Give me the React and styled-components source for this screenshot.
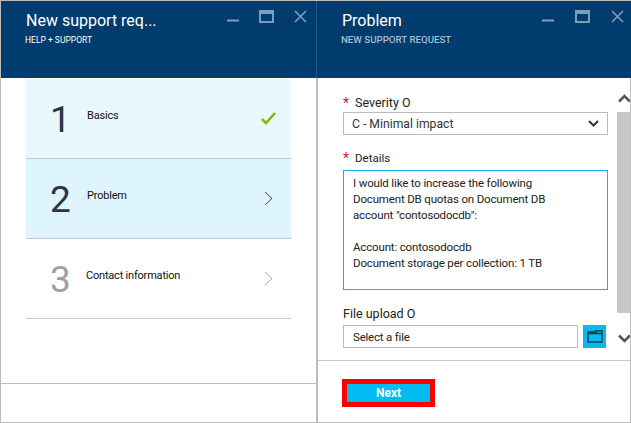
import React from 'react';
import styled, { createGlobalStyle } from 'styled-components';

const GlobalStyle = createGlobalStyle`
html, body {
    margin: 0;
    padding: 0;
    background: #fff;
}
* {
    box-sizing: border-box;
}
`;

const steps = [
    { num: '1', label: 'Basics', bg: '#e9f8fe', done: true },
    { num: '2', label: 'Problem', bg: '#dff5fd' },
    { num: '3', label: 'Contact information', bg: '#fff', muted: true },
];

const WindowButtons = ({ right }) => (
    <Buttons $right={right}>
        <svg width="12" height="3" viewBox="0 0 12 3"><rect width="12" height="2" y="0.5" fill="#7f9cb9" /></svg>
        <svg width="15" height="13" viewBox="0 0 15 13"><path d="M0 0h15v13H0zM2 4v7h11V4z" fill="#7f9cb9" fillRule="evenodd" /></svg>
        <svg width="13" height="13" viewBox="0 0 13 13"><path d="M1 1l11 11M12 1L1 12" stroke="#7f9cb9" strokeWidth="1.6" /></svg>
    </Buttons>
);

export default function App() {
    return (
        <Page>
            <GlobalStyle />
            <LeftBlade>
                <Header $left>
                    <TitleBlock>
                        <Title>New support req...</Title>
                        <Subtitle>HELP + SUPPORT</Subtitle>
                    </TitleBlock>
                    <WindowButtons />
                </Header>
                <LeftContent>
                    <StepList>
                        {steps.map(s => (
                            <Step key={s.num} $bg={s.bg}>
                                <StepNum $muted={s.muted}>{s.num}</StepNum>
                                <StepLabel $offset={s.muted}>{s.label}</StepLabel>
                                <StepIcon>
                                    {s.done ? (
                                        <svg width="15" height="13" viewBox="0 0 15 13"><path d="M1 7l4 4 9-10" fill="none" stroke="#7fba00" strokeWidth="2.6" /></svg>
                                    ) : (
                                        <svg width="9" height="15" viewBox="0 0 9 15"><path d="M1 1l7 6.5L1 14" fill="none" stroke={s.muted ? '#a8a8a8' : '#444'} strokeWidth="1" /></svg>
                                    )}
                                </StepIcon>
                            </Step>
                        ))}
                    </StepList>
                    <LeftFooter />
                </LeftContent>
            </LeftBlade>
            <RightBlade>
                <Header>
                    <TitleBlock>
                        <Title>Problem</Title>
                        <SubtitleMuted>NEW SUPPORT REQUEST</SubtitleMuted>
                    </TitleBlock>
                    <WindowButtons right />
                </Header>
                <Body>
                    <Form>
                        <FieldLabel><Star>*</Star>Severity O</FieldLabel>
                        <SelectBox>
                            <span>C - Minimal impact</span>
                            <svg width="11" height="7" viewBox="0 0 11 7"><path d="M1 1l4.5 4.5L10 1" fill="none" stroke="#333" strokeWidth="2" /></svg>
                        </SelectBox>
                        <DetailsLabel><Star>*</Star>Details</DetailsLabel>
                        <DetailsBox>
                            <div>I would like to increase the following</div>
                            <div>Document DB quotas on Document DB</div>
                            <div>account "contosodocdb":</div>
                            <br />
                            <div>Account: contosodocdb</div>
                            <div>Document storage per collection: 1 TB</div>
                        </DetailsBox>
                        <UploadLabel>File upload O</UploadLabel>
                        <UploadRow>
                            <FileBox>Select a file</FileBox>
                            <FolderButton>
                                <svg width="16" height="13" viewBox="0 0 16 13"><path d="M1 3.5h14v8.5H1zM1 3V2h8V.8h6V3" fill="none" stroke="#1f3a50" strokeWidth="1.5" /></svg>
                            </FolderButton>
                        </UploadRow>
                    </Form>
                    <ScrollBar>
                        <svg width="12" height="9" viewBox="0 0 12 9"><path d="M1 7.5l5.5-5.5L12 7.5" fill="none" stroke="#555" strokeWidth="2.6" /></svg>
                        <ScrollThumb />
                        <svg width="12" height="9" viewBox="0 0 12 9"><path d="M1 1.5L6.5 7 12 1.5" fill="none" stroke="#555" strokeWidth="2.6" /></svg>
                    </ScrollBar>
                </Body>
                <RightFooter>
                    <NextButton>Next</NextButton>
                </RightFooter>
            </RightBlade>
        </Page>
    );
}

const Page = styled.div`
display: flex;
width: 631px;
height: 423px;
border-top: 1px solid #bdbdbd;
border-bottom: 1px solid #bdbdbd;
background: #fff;
font-family: Roboto, "Liberation Sans", sans-serif;
overflow: hidden;
`;

const LeftBlade = styled.div`
display: flex;
flex-direction: column;
width: 317px;
border-left: 1px solid #bdbdbd;
`;

const LeftContent = styled.div`
display: flex;
flex-direction: column;
flex: 1;
border-right: 1px solid #bdbdbd;
`;

const RightBlade = styled.div`
display: flex;
flex-direction: column;
width: 314px;
`;

const Header = styled.div`
display: flex;
justify-content: space-between;
flex: none;
height: 77px;
padding: 9px ${p => (p.$left ? '9px' : '7px')} 0 25px;
background: #003c6e;
border-right: ${p => (p.$left ? '1px solid #20598c' : 'none')};
`;

const TitleBlock = styled.div`
display: flex;
flex-direction: column;
`;

const Title = styled.div`
font-size: 16px;
line-height: 22px;
color: #fff;
`;

const Subtitle = styled.div`
margin: 3px 0 0 -1px;
font-size: 8.5px;
line-height: 10px;
color: #fff;
`;

const SubtitleMuted = styled.div`
margin: 2px 0 0 -1px;
font-size: 9.7px;
line-height: 12px;
font-weight: 500;
color: #a9bccf;
`;

const Buttons = styled.div`
display: flex;
align-items: flex-start;
gap: ${p => (p.$right ? '21px' : '20px')};
padding-top: 0;
& > svg:first-child {
    margin-top: 9px;
}
`;

const StepList = styled.div`
display: flex;
flex-direction: column;
margin: 1px 25px 0;
`;

const Step = styled.div`
display: flex;
align-items: center;
height: 80px;
padding-right: 15px;
background: ${p => p.$bg};
border-bottom: 1px solid #c8c8c8;
`;

const StepNum = styled.div`
width: 60px;
padding: 3px 0 0 24px;
font-size: 37px;
line-height: 40px;
color: ${p => (p.$muted ? '#a0a0a0' : '#2c3440')};
`;

const StepLabel = styled.div`
flex: 1;
margin-top: -6px;
margin-left: ${p => (p.$offset ? '0' : '1px')};
font-size: 11px;
letter-spacing: -0.2px;
color: #111;
`;

const StepIcon = styled.div`
display: flex;
justify-content: center;
width: 16px;
`;

const LeftFooter = styled.div`
margin-top: auto;
height: 39px;
border-top: 1px solid #bdbdbd;
`;

const Body = styled.div`
display: flex;
flex: 1;
min-height: 0;
border-left: 1px solid #bdbdbd;
border-right: 1px solid #bdbdbd;
`;

const Form = styled.div`
display: flex;
flex-direction: column;
width: 290px;
padding: 17px 0 0 25px;
`;

const FieldLabel = styled.div`
display: flex;
font-size: 12.5px;
line-height: 16px;
color: #222;
`;

const DetailsLabel = styled(FieldLabel)`
margin-top: 15px;
font-size: 11.5px;
`;

const UploadLabel = styled(FieldLabel)`
margin-top: 16px;
`;

const Star = styled.span`
width: 12px;
font-size: 14px;
color: #e81123;
`;

const SelectBox = styled.div`
display: flex;
align-items: center;
justify-content: space-between;
height: 23px;
margin-top: 1px;
padding: 0 8px 0 8px;
border: 1px solid #bcbcbc;
font-size: 12.2px;
color: #333;
`;

const DetailsBox = styled.div`
height: 120px;
margin-top: 4px;
padding: 4px 9px;
border: 1px solid #1baee2;
font-size: 11.5px;
letter-spacing: -0.16px;
line-height: 16px;
color: #222;
`;

const UploadRow = styled.div`
display: flex;
gap: 5px;
margin-top: 3px;
`;

const FileBox = styled.div`
display: flex;
align-items: center;
width: 235px;
height: 23px;
padding-left: 9px;
border: 1px solid #bcbcbc;
font-size: 11.5px;
letter-spacing: -0.2px;
color: #222;
`;

const FolderButton = styled.div`
display: flex;
align-items: center;
justify-content: center;
width: 23px;
height: 23px;
background: #00bcf2;
`;

const ScrollBar = styled.div`
display: flex;
flex-direction: column;
align-items: flex-end;
width: 13px;
margin-left: auto;
padding-top: 16px;
`;

const ScrollThumb = styled.div`
flex: none;
width: 100%;
height: 201px;
margin: 9px 0 21px;
background: #c8c8c8;
`;

const RightFooter = styled.div`
flex: none;
height: 62px;
padding: 18px 0 0 24px;
border-top: 1px solid #c8c8c8;
border-left: 1px solid #bdbdbd;
border-right: 1px solid #bdbdbd;
`;

const NextButton = styled.div`
display: flex;
align-items: center;
justify-content: center;
width: 93px;
height: 28px;
border: 5px solid #f00;
background: #00bcf2;
font-size: 12px;
font-weight: 700;
color: #fff;
`;
